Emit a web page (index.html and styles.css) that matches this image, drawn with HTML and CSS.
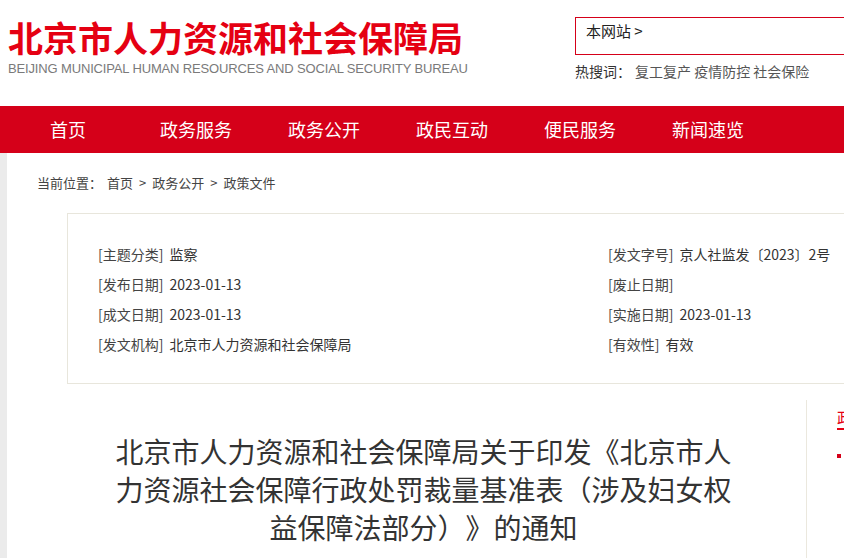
FILE: index.html
```html
<!DOCTYPE html>
<html lang="zh-CN">
<head>
    <meta charset="UTF-8">
    <meta name="viewport" content="width=device-width, initial-scale=1.0">
    <title>北京市人力资源和社会保障局</title>
    <link rel="stylesheet" href="styles.css">
</head>
<body>
    <div class="page">
        <div class="header">
            <div class="logo">
                <p class="logo_cn">北京市人力资源和社会保障局</p>
                <p class="logo_en">BEIJING MUNICIPAL HUMAN RESOURCES AND SOCIAL SECURITY BUREAU</p>
            </div>
            <div class="search">
                <div class="search_box">本网站 &gt;</div>
                <p class="hot_words">热搜词：<span>复工复产</span> <span>疫情防控</span> <span>社会保险</span></p>
            </div>
        </div>
        <div class="nav">
            <a href="#">首页</a>
            <a href="#">政务服务</a>
            <a href="#">政务公开</a>
            <a href="#">政民互动</a>
            <a href="#">便民服务</a>
            <a href="#">新闻速览</a>
        </div>
        <div class="main">
            <div class="main_inner">
                <p class="crumb">当前位置：<a href="#">首页</a><span class="sep">&gt;</span><a href="#">政务公开</a><span class="sep">&gt;</span><a href="#">政策文件</a></p>
                <div class="info_box">
                    <p class="info_row"><span class="info_label">[主题分类]</span>监察</p>
                    <p class="info_row"><span class="info_label">[发文字号]</span>京人社监发〔2023〕2号</p>
                    <p class="info_row"><span class="info_label">[发布日期]</span>2023-01-13</p>
                    <p class="info_row"><span class="info_label">[废止日期]</span></p>
                    <p class="info_row"><span class="info_label">[成文日期]</span>2023-01-13</p>
                    <p class="info_row"><span class="info_label">[实施日期]</span>2023-01-13</p>
                    <p class="info_row"><span class="info_label">[发文机构]</span>北京市人力资源和社会保障局</p>
                    <p class="info_row"><span class="info_label">[有效性]</span>有效</p>
                </div>
                <div class="content">
                    <div class="article">
                        <h1 class="doc_title">北京市人力资源和社会保障局关于印发《北京市人力资源社会保障行政处罚裁量基准表（涉及妇女权益保障法部分）》的通知</h1>
                    </div>
                    <div class="sidebar">
                        <p class="side_title">政策解读</p>
                        <ul class="side_list">
                            <li>关于《北京市人力资源社会保障行政处罚裁量基准表》的解读</li>
                        </ul>
                    </div>
                </div>
            </div>
        </div>
    </div>
</body>
</html>
```

FILE: styles.css
```css
html, body {
    margin: 0;
    padding: 0;
    overflow: hidden;
    background: white;
    font-family: "Liberation Sans", "Noto Sans CJK SC", sans-serif;
    color: #333;
    text-spacing-trim: space-all;
}
p {
    margin: 0;
}
.page {
    width: 1300px;
}
.header {
    display: flex;
    height: 106px;
    padding-left: 8px;
    box-sizing: border-box;
}
.logo {
    width: 567px;
    padding-top: 15px;
}
.logo_cn {
    font-family: "Noto Sans CJK SC", sans-serif;
    font-size: 35px;
    font-weight: bold;
    line-height: 44px;
    color: #e50012;
    white-space: nowrap;
}
.logo_en {
    margin-top: 2px;
    font-size: 13px;
    line-height: 16px;
    color: #7a7a7a;
    letter-spacing: -0.15px;
    white-space: nowrap;
}
.search {
    padding-top: 17px;
}
.search_box {
    width: 400px;
    height: 38px;
    padding: 1px 10px;
    box-sizing: border-box;
    border: 1px solid #d50019;
    font-family: "Noto Sans CJK SC", sans-serif;
    font-size: 15px;
    line-height: 24px;
    color: #222;
}
.hot_words {
    margin-top: 6px;
    font-family: "Noto Sans CJK SC", sans-serif;
    font-size: 14px;
    line-height: 20px;
    color: #333;
}
.hot_words span {
    color: #555;
}
.hot_words span:first-child {
    margin-left: 4px;
}
.nav {
    display: flex;
    height: 47px;
    padding-left: 4px;
    background: #d50019;
}
.nav a {
    width: 128px;
    text-align: center;
    font-family: "Noto Sans CJK SC", sans-serif;
    font-size: 18px;
    line-height: 47px;
    color: white;
    text-decoration: none;
}
.main {
    padding-left: 7px;
    background: #ebebeb;
}
.main_inner {
    background: white;
    min-height: 420px;
}
.crumb {
    padding-left: 30px;
    font-family: "Noto Sans CJK SC", sans-serif;
    font-size: 13px;
    line-height: 60px;
    color: #444;
}
.crumb a {
    color: #444;
    text-decoration: none;
}
.crumb a:first-child {
    margin-left: 5px;
}
.crumb .sep {
    padding: 0 6px;
}
.info_box {
    display: grid;
    grid-template-columns: 510px auto;
    width: 1080px;
    margin-left: 60px;
    padding: 25px 30px 24px;
    box-sizing: border-box;
    border: 1px solid #e8e6dc;
}
.info_row {
    font-family: "Noto Sans CJK SC", sans-serif;
    font-size: 14px;
    line-height: 30px;
    color: #333;
    white-space: nowrap;
}
.info_label {
    margin-right: 6px;
    color: #444;
}
.content {
    display: flex;
    margin-top: 16px;
}
.article {
    width: 799px;
    padding-left: 34px;
    box-sizing: border-box;
}
.doc_title {
    max-width: 630px;
    margin: 0 auto;
    padding-top: 32px;
    font-family: "Noto Sans CJK SC", sans-serif;
    font-size: 28px;
    font-weight: normal;
    line-height: 38px;
    text-align: center;
    color: #333;
}
.sidebar {
    min-height: 200px;
    padding-left: 30px;
    border-left: 1px solid #ebe8de;
}
.side_title {
    display: inline-block;
    padding-top: 6px;
    border-bottom: 2px solid #e50012;
    font-family: "Noto Sans CJK SC", sans-serif;
    font-size: 16px;
    line-height: 22px;
    color: #e50012;
}
.side_list {
    margin: 0;
    padding: 14px 0 0;
    list-style: none;
}
.side_list li {
    position: relative;
    padding-left: 12px;
    font-family: "Noto Sans CJK SC", sans-serif;
    font-size: 14px;
    line-height: 24px;
    color: #333;
}
.side_list li::before {
    content: "";
    position: absolute;
    left: 0;
    top: 10px;
    width: 4px;
    height: 4px;
    background: #d50019;
}
```
